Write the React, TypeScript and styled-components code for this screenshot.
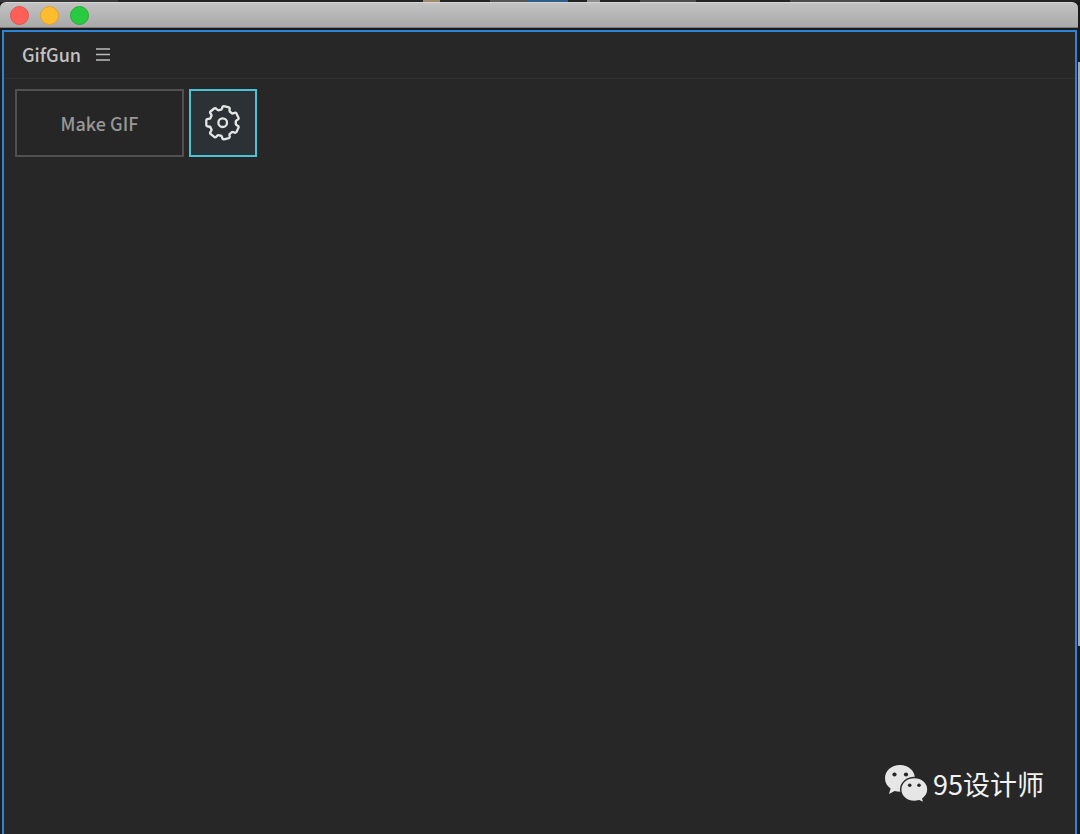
import React from 'react';
import styled, { createGlobalStyle } from 'styled-components';

const GlobalStyle = createGlobalStyle`
  *, *::before, *::after { box-sizing: border-box; }
  html, body, #root { height: 100%; }
  body {
    margin: 0;
    background: #1c1b1c;
    overflow: hidden;
    font-family: "Noto Sans CJK SC", "Noto Sans", sans-serif;
  }
`;

const Desktop = styled.div`
  display: flex;
  flex-direction: column;
  height: 100%;
`;

const Backdrop = styled.div`
  flex: none;
  height: 2px;
  background: linear-gradient(90deg,
    #3a393a 0 118px, #242324 118px 423px, #a08c6a 423px 440px, #242324 440px 490px,
    #555 490px 528px, #2d5f8c 528px 568px, #242324 568px 587px, #8c8c8c 587px 600px,
    #242324 600px 640px, #4c4c4c 640px 696px, #242324 696px 790px, #4c4c4c 790px 880px,
    #242324 880px);
`;

const Columns = styled.div`
  flex: 1;
  display: flex;
  min-height: 0;
`;

const Window = styled.main`
  flex: 1;
  display: flex;
  flex-direction: column;
  min-width: 0;
`;

const TitleBar = styled.div`
  flex: none;
  display: flex;
  align-items: center;
  gap: 11px;
  height: 26px;
  padding-left: 10px;
  border-top: 1px solid #d6d6d6;
  border-bottom: 1px solid #7c7c7c;
  border-radius: 6px 6px 0 0;
  background: linear-gradient(#c2c2c2, #a9a9a9);
`;

const Light = styled.button<{ $fill: string; $edge: string }>`
  width: 19px;
  height: 19px;
  padding: 0;
  border: 1px solid ${(p) => p.$edge};
  border-radius: 50%;
  background: ${(p) => p.$fill};
`;

const Panel = styled.section`
  flex: 1;
  display: flex;
  flex-direction: column;
  margin: 2px 1px 0 2px;
  border: 2px solid #2d83d6;
  border-bottom: 0;
  background: #272727;
`;

const PanelHeader = styled.header`
  flex: none;
  display: flex;
  align-items: center;
  gap: 14px;
  height: 47px;
  padding: 0 18px 3px;
  border-bottom: 1px solid #303030;
`;

const PanelTitle = styled.h1`
  margin: 0;
  color: #c3c3c3;
  font-size: 18px;
  font-weight: 500;
  line-height: 24px;
`;

const MenuButton = styled.button`
  display: flex;
  padding: 0;
  border: 0;
  background: none;
  color: #bdbdbd;
`;

const Toolbar = styled.div`
  display: flex;
  gap: 5px;
  padding: 10px 11px;
`;

const ToolButton = styled.button<{ $active?: boolean }>`
  display: flex;
  align-items: center;
  justify-content: center;
  width: ${(p) => (p.$active ? 68 : 169)}px;
  height: 68px;
  padding: 0;
  border: 2px solid ${(p) => (p.$active ? '#4bc3d6' : '#505050')};
  background: ${(p) => (p.$active ? '#2b3134' : '#262626')};
  color: ${(p) => (p.$active ? '#e4e6e6' : '#979797')};
  font-family: inherit;
  font-size: 18px;
  font-weight: 500;
  line-height: 24px;
`;

const Signature = styled.footer`
  display: flex;
  align-items: center;
  justify-content: flex-end;
  gap: 5px;
  margin-top: auto;
  padding: 0 31px 31px 0;
  color: #f2f2f2;
  font-size: 27px;
  line-height: 38px;
`;

const Neighbour = styled.div`
  flex: none;
  width: 2px;
  margin-top: 34px;
  height: 584px;
  background: #a9a6ab;
`;

const Edge = styled.div`
  flex: none;
  width: 2px;
  padding-top: 26px;
`;

const TEETH = 7;

function gearPath(c: number): string {
  const at = (deg: number, r: number) => {
    const a = (deg * Math.PI) / 180;
    return `${(c + r * Math.cos(a)).toFixed(2)} ${(c + r * Math.sin(a)).toFixed(2)}`;
  };
  const step = 360 / TEETH;
  let d = '';
  for (let i = 0; i < TEETH; i++) {
    const t = 180 + i * step;
    d += `${i ? 'L' : 'M'}${at(t - 15, 14.6)}`;
    d += `Q${at(t - 14, 16.6)} ${at(t - 9, 16.6)}`;
    d += `L${at(t + 9, 16.6)}`;
    d += `Q${at(t + 14, 16.6)} ${at(t + 15, 14.6)}`;
    d += `Q${at(t + 18, 12.6)} ${at(t + step / 2, 13.2)}`;
    d += `Q${at(t + step - 18, 12.6)} ${at(t + step - 15, 14.6)}`;
  }
  return d + 'Z';
}

const GearIcon = () => (
  <svg width="36" height="36" viewBox="0 0 36 36" fill="none" stroke="currentColor" strokeWidth="2.3" strokeLinejoin="round" aria-hidden="true">
    <path d={gearPath(17.7)} />
    <circle cx="17.7" cy="17.7" r="4.3" />
  </svg>
);

const MenuIcon = () => (
  <svg width="16" height="14" viewBox="0 0 16 14" fill="none" stroke="currentColor" strokeWidth="1.5" aria-hidden="true">
    <path d="M1 2h14M1 7.500h14M1 13h14" />
  </svg>
);

const ChatIcon = () => (
  <svg width="44" height="38" viewBox="0 0 44 38" aria-hidden="true">
    <path fill="#e6e6e6" d="M16 0C7.500 0 1 5.800 1 13.200c0 4.400 2.200 7.900 5.600 10.400L5 29l5.700-3c1.700.5 3.500.8 5.300.8 8.400 0 15-5.900 15-13.400S24.400 0 16 0Z" />
    <path fill="#e6e6e6" stroke="#272727" strokeWidth="1.400" d="M30.300 12.500c-7.600 0-13.600 5.200-13.600 12s6 12 13.600 12c1.700 0 3.300-.3 4.800-.7l5 2.200-1.300-4.200c3-2.200 5.100-5.400 5.100-9.300 0-6.800-6-12-13.600-12Z" />
    <g fill="#272727">
      <circle cx="10.500" cy="9.500" r="2.100" />
      <circle cx="22" cy="9.500" r="2.100" />
      <circle cx="25.700" cy="20.300" r="1.800" />
      <circle cx="35" cy="20.300" r="1.800" />
    </g>
  </svg>
);

export default function App() {
  return (
    <>
      <GlobalStyle />
      <Desktop>
        <Backdrop />
        <Columns>
          <Window>
            <TitleBar>
              <Light type="button" aria-label="Close" $fill="#ff5f57" $edge="#e2544d" />
              <Light type="button" aria-label="Minimize" $fill="#ffbd2e" $edge="#e0a32f" />
              <Light type="button" aria-label="Zoom" $fill="#28cb40" $edge="#27ae38" />
            </TitleBar>
            <Panel>
              <PanelHeader>
                <PanelTitle>GifGun</PanelTitle>
                <MenuButton type="button" aria-label="Panel menu">
                  <MenuIcon />
                </MenuButton>
              </PanelHeader>
              <Toolbar>
                <ToolButton type="button">Make GIF</ToolButton>
                <ToolButton type="button" aria-label="Settings" $active>
                  <GearIcon />
                </ToolButton>
              </Toolbar>
              <Signature>
                <ChatIcon />
                <span>95设计师</span>
              </Signature>
            </Panel>
          </Window>
          <Edge>
            <Neighbour />
          </Edge>
        </Columns>
      </Desktop>
    </>
  );
}
